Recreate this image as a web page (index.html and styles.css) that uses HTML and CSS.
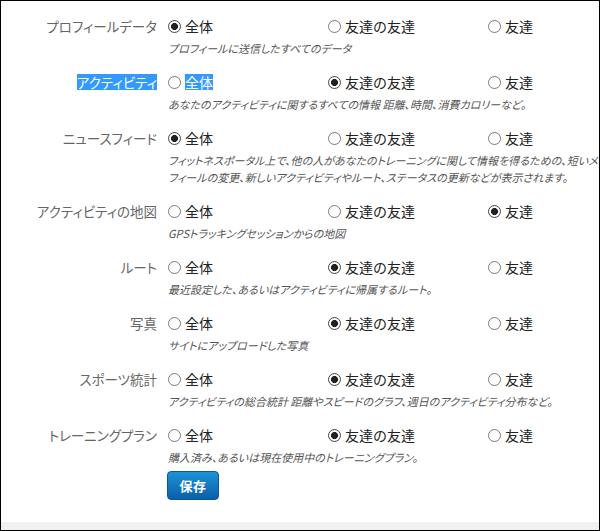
FILE: index.html
```html
<!DOCTYPE html>
<html lang="ja">
<head>
<meta charset="utf-8">
<link rel="stylesheet" href="styles.css">
</head>
<body>
<div class="frame">
  <div class="content">
    <div class="row">
      <div class="label">プロフィールデータ</div>
      <div class="options">
        <div class="option"><span class="radio checked"></span>全体</div>
        <div class="option"><span class="radio"></span>友達の友達</div>
        <div class="option"><span class="radio"></span>友達</div>
      </div>
      <div class="desc">プロフィールに送信したすべてのデータ</div>
    </div>
    <div class="row">
      <div class="label"><span class="sel">アクティビティ</span></div>
      <div class="options">
        <div class="option"><span class="radio"></span><span class="sel">全体</span></div>
        <div class="option"><span class="radio checked"></span>友達の友達</div>
        <div class="option"><span class="radio"></span>友達</div>
      </div>
      <div class="desc">あなたのアクティビティに関するすべての情報 距離、時間、消費カロリーなど。</div>
    </div>
    <div class="row">
      <div class="label">ニュースフィード</div>
      <div class="options">
        <div class="option"><span class="radio checked"></span>全体</div>
        <div class="option"><span class="radio"></span>友達の友達</div>
        <div class="option"><span class="radio"></span>友達</div>
      </div>
      <div class="desc">フィットネスポータル上で、他の人があなたのトレーニングに関して情報を得るための、短いメッセージ。プロ<br>フィールの変更、新しいアクティビティやルート、ステータスの更新などが表示されます。</div>
    </div>
    <div class="row">
      <div class="label">アクティビティの地図</div>
      <div class="options">
        <div class="option"><span class="radio"></span>全体</div>
        <div class="option"><span class="radio"></span>友達の友達</div>
        <div class="option"><span class="radio checked"></span>友達</div>
      </div>
      <div class="desc">GPSトラッキングセッションからの地図</div>
    </div>
    <div class="row">
      <div class="label">ルート</div>
      <div class="options">
        <div class="option"><span class="radio"></span>全体</div>
        <div class="option"><span class="radio checked"></span>友達の友達</div>
        <div class="option"><span class="radio"></span>友達</div>
      </div>
      <div class="desc">最近設定した、あるいはアクティビティに帰属するルート。</div>
    </div>
    <div class="row">
      <div class="label">写真</div>
      <div class="options">
        <div class="option"><span class="radio"></span>全体</div>
        <div class="option"><span class="radio checked"></span>友達の友達</div>
        <div class="option"><span class="radio"></span>友達</div>
      </div>
      <div class="desc">サイトにアップロードした写真</div>
    </div>
    <div class="row">
      <div class="label">スポーツ統計</div>
      <div class="options">
        <div class="option"><span class="radio"></span>全体</div>
        <div class="option"><span class="radio checked"></span>友達の友達</div>
        <div class="option"><span class="radio"></span>友達</div>
      </div>
      <div class="desc">アクティビティの総合統計 距離やスピードのグラフ、週日のアクティビティ分布など。</div>
    </div>
    <div class="row last">
      <div class="label">トレーニングプラン</div>
      <div class="options">
        <div class="option"><span class="radio"></span>全体</div>
        <div class="option"><span class="radio checked"></span>友達の友達</div>
        <div class="option"><span class="radio"></span>友達</div>
      </div>
      <div class="desc">購入済み、あるいは現在使用中のトレーニングプラン。</div>
    </div>
    <div class="actions">
      <button class="save">保存</button>
    </div>
  </div>
  <div class="footer"></div>
</div>
</body>
</html>
```
FILE: styles.css
```css
html, body {
  margin: 0;
  padding: 0;
  background: #ffffff;
}

body {
  font-family: "Noto Sans CJK JP", "Noto Sans", sans-serif;
  overflow: hidden;
}

.frame {
  width: 600px;
  height: 531px;
  box-sizing: border-box;
  border: 1px solid #000000;
  overflow: hidden;
  display: flex;
  flex-direction: column;
  background: #ffffff;
}

.content {
  flex: 1;
  padding-top: 12px;
}

.row {
  display: grid;
  grid-template-columns: 156px 1fr;
  column-gap: 11px;
  margin-bottom: 12px;
}

.row.last {
  margin-bottom: 5px;
}

.label {
  text-align: right;
  font-size: 13.5px;
  line-height: 26px;
  color: #666666;
  white-space: nowrap;
  font-feature-settings: "palt";
}

.options {
  display: flex;
}

.option {
  flex: none;
  width: 160px;
  height: 26px;
  display: flex;
  align-items: center;
  gap: 4px;
  font-size: 14px;
  color: #222222;
  white-space: nowrap;
}

.radio {
  flex: none;
  width: 13px;
  height: 13px;
  box-sizing: border-box;
  border: 1px solid #7a7a7a;
  border-radius: 50%;
  background: #ffffff;
}

.radio.checked {
  border-color: #444444;
  background: radial-gradient(circle, #222222 0, #222222 3.2px, #ffffff 3.8px);
}

.sel {
  display: inline-block;
  line-height: 16px;
  background: #3399ff;
  color: #ffffff;
}

.desc {
  grid-column: 2;
  margin-top: 1px;
  font-size: 11px;
  line-height: 17px;
  font-style: italic;
  color: #555555;
  white-space: nowrap;
  font-feature-settings: "palt";
}

.actions {
  padding-left: 166px;
}

.save {
  width: 52px;
  height: 29px;
  padding: 0;
  border: 1px solid #0a5799;
  border-radius: 4px;
  background: linear-gradient(#1e93d6, #0b5ea9);
  color: #ffffff;
  font-family: "Noto Sans CJK JP", sans-serif;
  font-size: 13px;
  font-weight: bold;
  letter-spacing: 0.5px;
}

.footer {
  flex: none;
  height: 8px;
  background: #f0f1f3;
}
```
